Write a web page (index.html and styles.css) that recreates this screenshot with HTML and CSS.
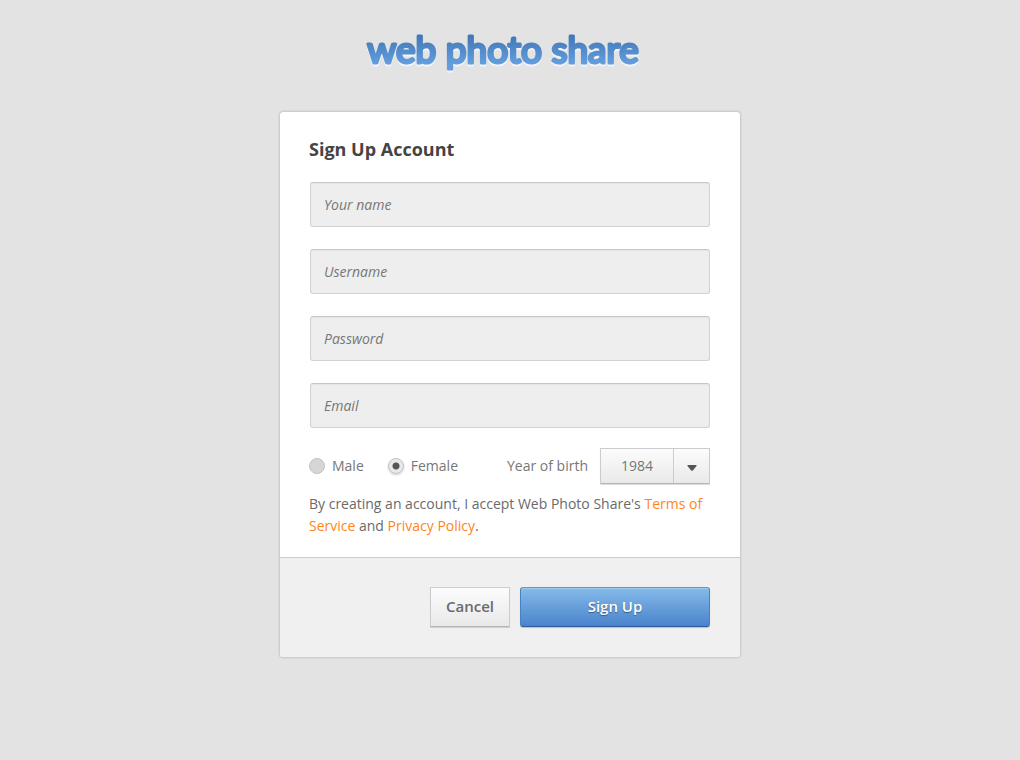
FILE: index.html
```html
<!DOCTYPE html>
<html lang="en">
<head>
<meta charset="utf-8">
<meta name="viewport" content="width=device-width, initial-scale=1">
<title>Sign Up – web photo share</title>
<link rel="stylesheet" href="styles.css">
</head>
<body>
<header class="site-header">
  <h1 class="logo">
    <svg class="logo-art" viewBox="0 0 290 55">
      <defs>
        <linearGradient id="logo-blue" gradientUnits="userSpaceOnUse" x1="0" y1="11" x2="0" y2="46">
          <stop offset="0" stop-color="#4379b8"/>
          <stop offset="0.75" stop-color="#629ddd"/>
          <stop offset="1" stop-color="#629ddd"/>
        </linearGradient>
      </defs>
      <text class="logo-text" x="144" y="37">web photo share</text>
    </svg>
  </h1>
</header>
<main class="page">
  <form class="card">
    <div class="card-body">
      <h2 class="title">Sign Up Account</h2>
      <div class="fields">
        <input class="field" type="text" placeholder="Your name" aria-label="Your name">
        <input class="field" type="text" placeholder="Username" aria-label="Username">
        <input class="field" type="password" placeholder="Password" aria-label="Password">
        <input class="field" type="email" placeholder="Email" aria-label="Email">
      </div>
      <div class="options">
        <div class="gender">
          <label class="choice"><input class="radio" type="radio" name="gender" value="male">Male</label>
          <label class="choice"><input class="radio" type="radio" name="gender" value="female" checked>Female</label>
        </div>
        <div class="birth">
          <label for="year">Year of birth</label>
          <div class="select-box">
            <select class="year" id="year">
              <option>1983</option>
              <option selected>1984</option>
              <option>1985</option>
            </select>
            <span class="arrow"><svg width="10" height="6" viewBox="0 0 10 6"><path d="M1 0h8q1 0 .5 1L5.8 5.4q-.8.8-1.6 0L.5 1Q0 0 1 0z" fill="#555"/></svg></span>
          </div>
        </div>
      </div>
      <p class="terms">By creating an account, I accept Web Photo Share's <a href="#terms">Terms of Service</a> and <a href="#privacy">Privacy Policy</a>.</p>
    </div>
    <div class="card-footer">
      <button class="button cancel" type="button">Cancel</button>
      <button class="button submit" type="submit">Sign Up</button>
    </div>
  </form>
</main>
</body>
</html>
```
FILE: styles.css
```css
* {
  box-sizing: border-box;
}

body {
  margin: 0;
  background: #e3e3e3;
  color: #6a6a6a;
  font-family: "Open Sans", "Noto Sans", sans-serif;
  font-size: 14px;
  font-weight: 400;
  line-height: 22px;
}

.site-header {
  display: flex;
  justify-content: center;
  padding: 26px 28px 30px 16px;
}

.logo {
  margin: 0;
}

.logo-art {
  display: block;
  width: 290px;
  max-width: 100%;
}

.logo-text {
  font-family: Lato, "Open Sans", sans-serif;
  font-size: 37px;
  font-weight: 400;
  text-anchor: middle;
  fill: url(#logo-blue);
  stroke: url(#logo-blue);
  stroke-width: 3px;
  stroke-linejoin: round;
  filter: drop-shadow(0 2px 0 #f4f4f4);
}

.page {
  display: flex;
  justify-content: center;
  padding: 0 16px 40px;
}

.card {
  width: 100%;
  max-width: 462px;
  overflow: hidden;
  background: #fff;
  border: 1px solid #cdcdcd;
  border-radius: 4px;
  box-shadow: 0 0 2px rgba(0, 0, 0, 0.12);
}

.card-body {
  padding: 23px 30px 20px 29px;
}

.title {
  margin: 0 0 19px;
  color: #444;
  font-size: 18px;
  font-weight: 700;
  line-height: 28px;
}

.fields {
  display: grid;
  gap: 22px;
  padding-left: 1px;
}

.field {
  width: 100%;
  height: 45px;
  padding: 0 13px;
  background: #eee;
  border: 1px solid #d2d2d2;
  border-top-color: #c6c6c6;
  border-radius: 3px;
  box-shadow: inset 0 1px 1px rgba(0, 0, 0, 0.04);
  color: #555;
  font: inherit;
}

.field::placeholder {
  color: #777;
  font-style: italic;
  opacity: 1;
}

.options {
  display: flex;
  flex-wrap: wrap;
  align-items: center;
  justify-content: space-between;
  gap: 8px;
  margin-top: 20px;
}

.gender {
  display: flex;
  gap: 24px;
}

.choice {
  display: flex;
  align-items: center;
  gap: 7px;
}

.radio {
  appearance: none;
  width: 16px;
  height: 16px;
  margin: 0;
  background: #d6d6d6;
  border: 1px solid #c2c2c2;
  border-radius: 50%;
}

.radio:checked {
  background: radial-gradient(circle, #555 0 3px, #e8e8e8 4px);
  border-color: #c2c2c2;
  box-shadow: 0 1px 2px rgba(0, 0, 0, 0.2);
}

.gender,
.birth {
  color: #777;
}

.birth {
  display: flex;
  align-items: center;
  gap: 12px;
}

.select-box {
  position: relative;
}

.year {
  appearance: none;
  display: block;
  width: 110px;
  height: 36px;
  padding: 0 40px 0 20px;
  background: linear-gradient(#fcfcfc, #e9e9e9);
  border: 1px solid #ccc;
  border-bottom-color: #b5b5b5;
  border-radius: 1px;
  box-shadow: 0 1px 1px rgba(0, 0, 0, 0.15);
  color: #777;
  font: inherit;
}

.arrow {
  position: absolute;
  inset: 1px 1px 1px auto;
  display: flex;
  align-items: center;
  justify-content: center;
  width: 36px;
  padding-top: 4px;
  border-left: 1px solid #ccc;
  pointer-events: none;
}

.terms {
  margin: 9px 0 0;
}

.terms a {
  color: #ff851b;
  text-decoration: none;
}

.card-footer {
  display: flex;
  justify-content: flex-end;
  gap: 10px;
  padding: 29px 30px 30px;
  background: #f0f0f0;
  border-top: 1px solid #ccc;
}

.button {
  height: 40px;
  padding: 0 14px 2px;
  border: 1px solid;
  font: inherit;
  font-size: 15px;
  font-weight: 600;
  cursor: pointer;
}

.cancel {
  min-width: 80px;
  background: linear-gradient(#fcfcfc, #e9e9e9);
  border-color: #ccc #ccc #b5b5b5;
  border-radius: 1px;
  box-shadow: 0 1px 1px rgba(0, 0, 0, 0.15);
  color: #6a6a6a;
}

.submit {
  width: 190px;
  background: linear-gradient(#85bbe9, #4a83cc);
  border-color: #579acb #4883bd #2c5a9c;
  border-radius: 3px;
  box-shadow: inset 0 1px 0 #9dcaee, 0 1px 1px rgba(0, 0, 0, 0.2);
  color: #fff;
  text-shadow: 0 1px 1px rgba(0, 0, 0, 0.4);
}
```
